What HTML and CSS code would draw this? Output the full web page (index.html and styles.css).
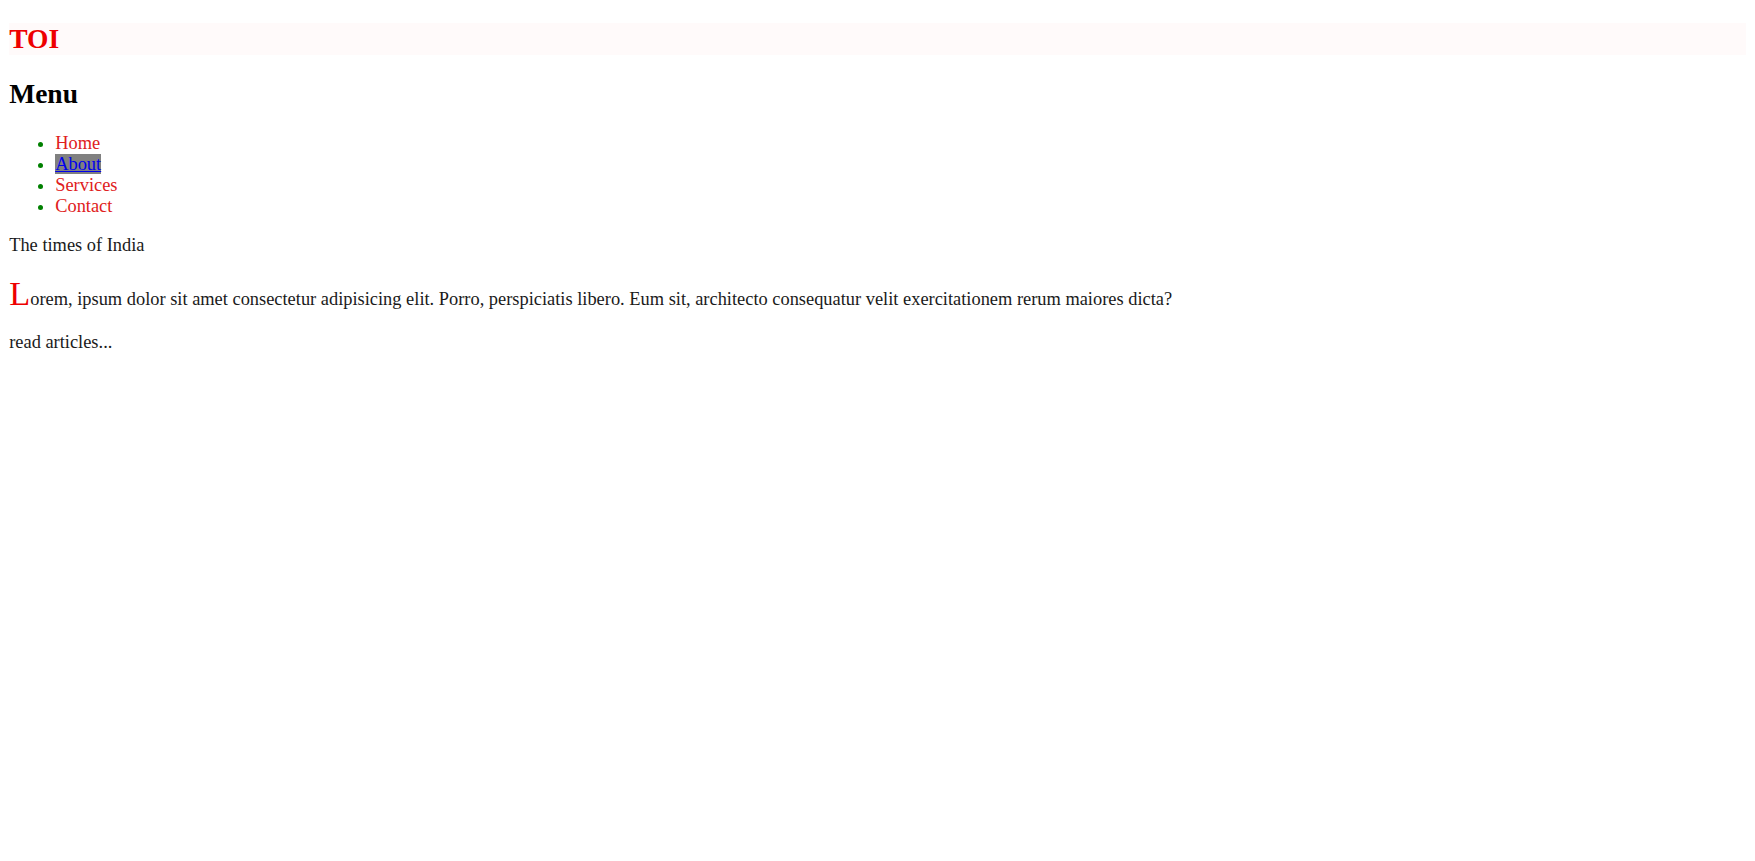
FILE: index.html
```html
<!DOCTYPE html>
<html>
<head>
<meta charset="utf-8">
<title>TOI</title>
<link rel="stylesheet" href="styles.css">
</head>
<body>
<h2 class="brand">TOI</h2>
<h2 class="menu-title">Menu</h2>
<ul class="menu">
  <li><a class="menu-link" href="#">Home</a></li>
  <li><a class="menu-link menu-link-active" href="#">About</a></li>
  <li><a class="menu-link" href="#">Services</a></li>
  <li><a class="menu-link" href="#">Contact</a></li>
</ul>
<p class="tagline">The times of India</p>
<p class="lead">Lorem, ipsum dolor sit amet consectetur adipisicing elit. Porro, perspiciatis libero. Eum sit, architecto consequatur velit exercitationem rerum maiores dicta?</p>
<p class="more">read articles...</p>
</body>
</html>
```

FILE: styles.css
```css
html {
  font-family: "Liberation Serif", "Times New Roman", serif;
  font-size: 18.4px;
}
body {
  margin: 0;
  padding: 9.2px;
  color: #1a1a1a;
}
h2 {
  font-size: 27.5px;
  margin: 22.9px 0;
  font-weight: bold;
}
.brand {
  margin-top: 13.7px;
  background: #fffafa;
  color: #ee0000;
}
.menu-title {
  color: #000;
}
.menu {
  margin: 18.4px 0;
  padding-left: 46px;
  color: #008000;
}
.menu-link {
  color: #e02020;
  text-decoration: none;
}
.menu-link-active {
  color: #0000ee;
  background: #808080;
  text-decoration: underline;
}
p {
  margin: 18.4px 0;
}
.lead::first-letter {
  color: #ee0000;
  font-size: 34.4px;
}
```
